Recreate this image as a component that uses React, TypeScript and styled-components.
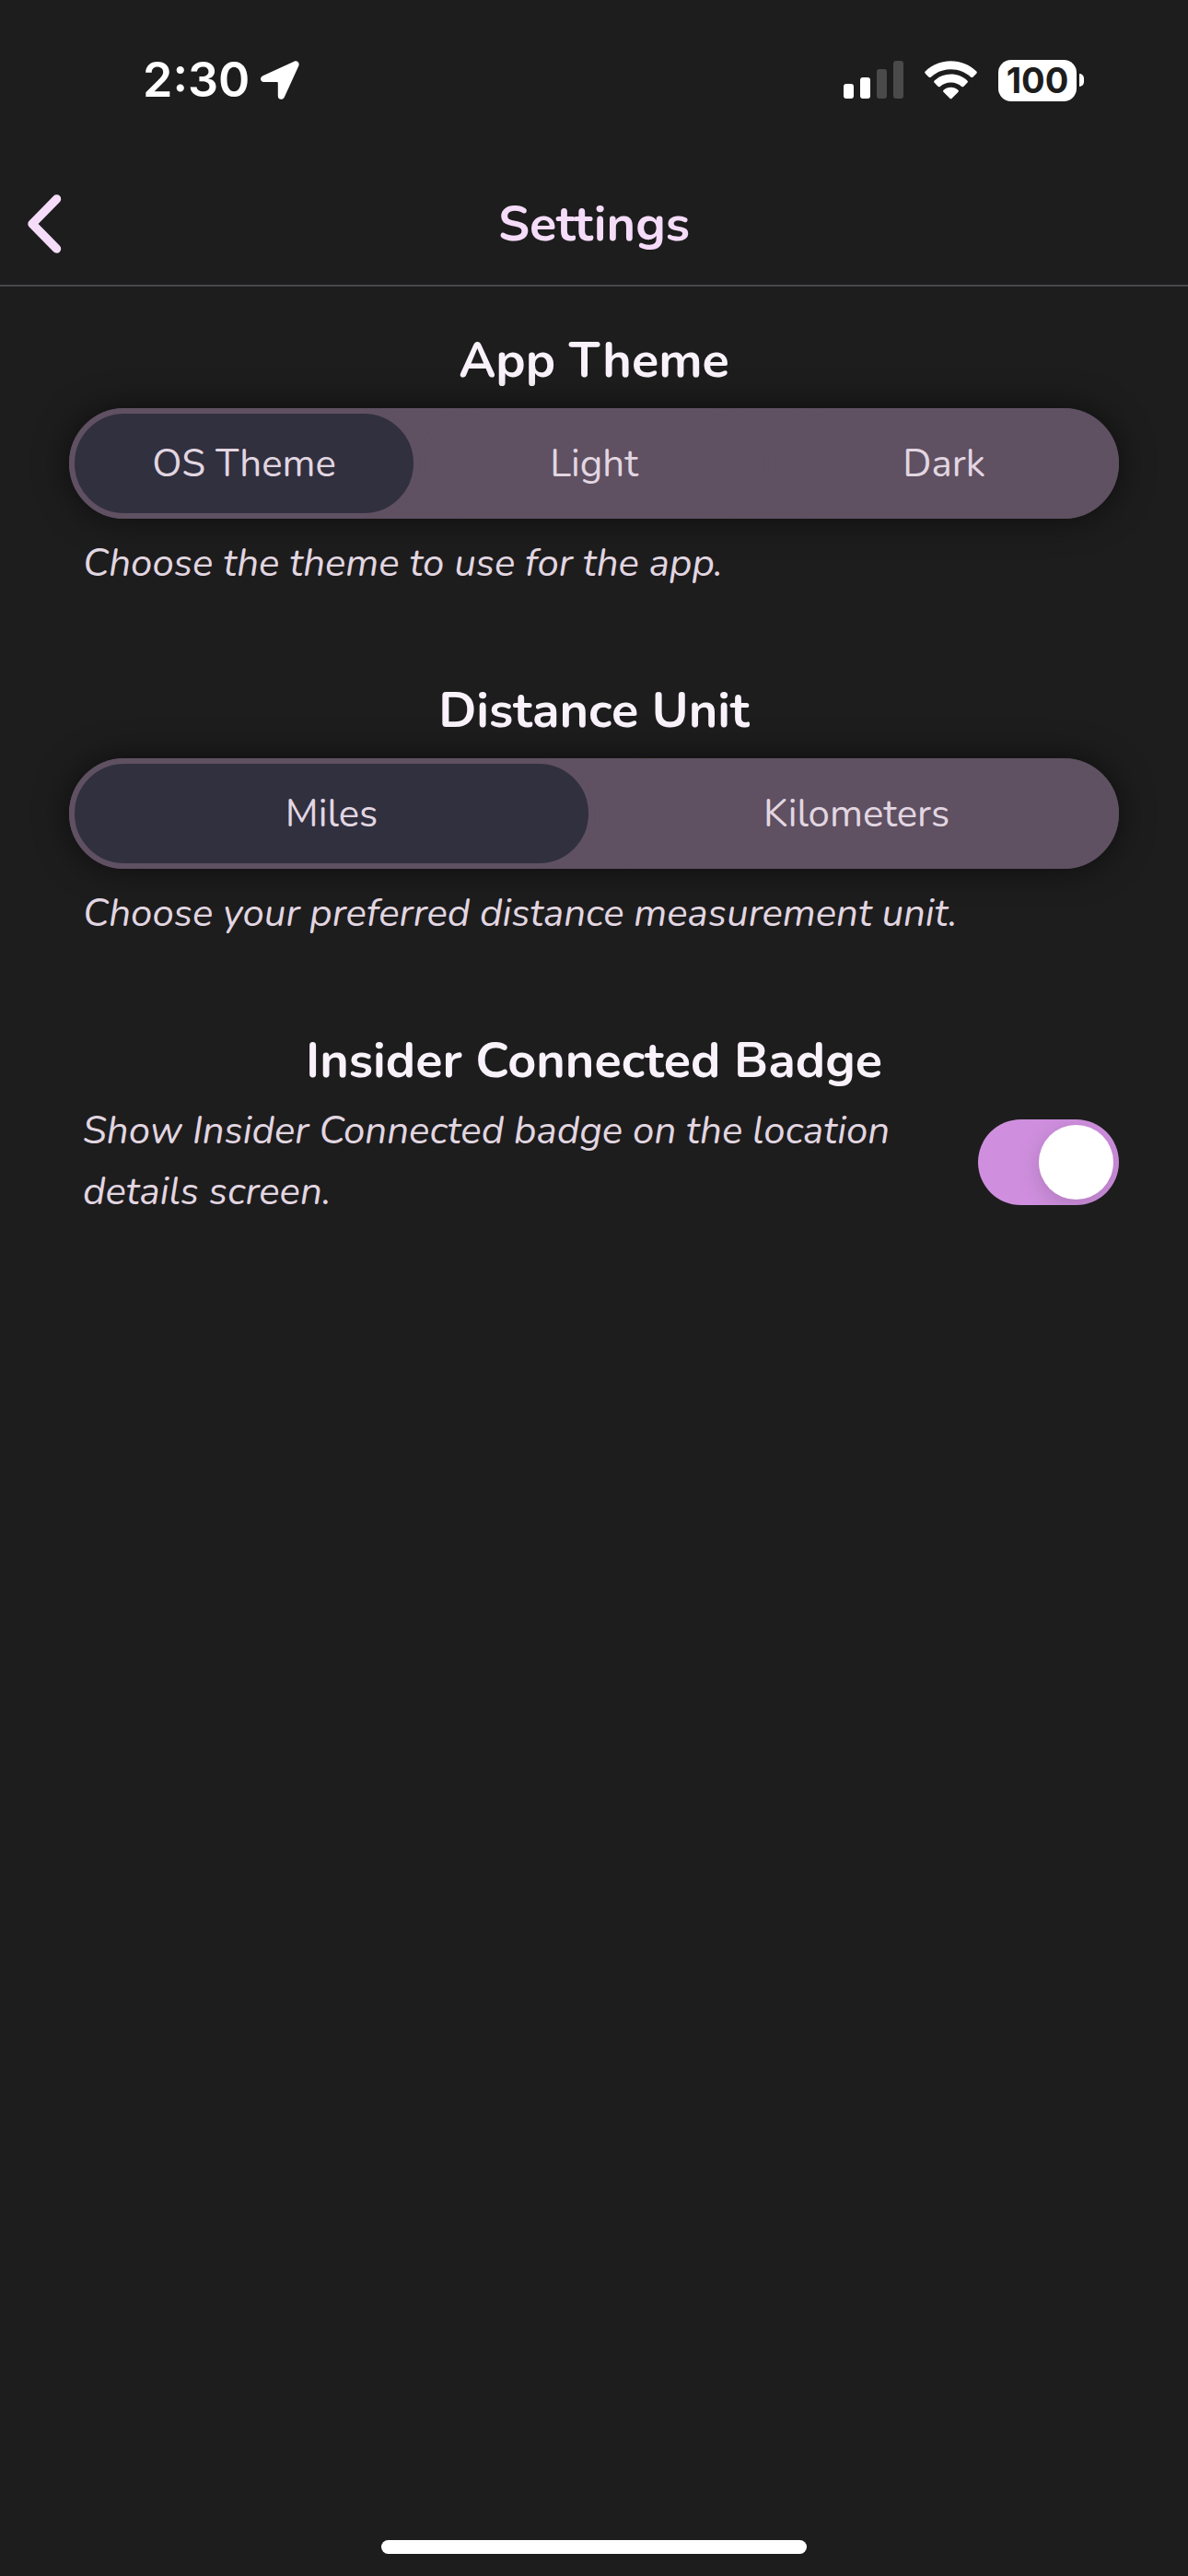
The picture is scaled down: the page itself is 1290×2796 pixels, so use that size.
import React, { useState } from "react";
import styled, { createGlobalStyle } from "styled-components";

const color = {
  background: "#1d1d1d",
  divider: "#48474a",
  accent: "#f5dcf9",
  heading: "#f9f2fb",
  text: "#e2d6e1",
  track: "#5f5062",
  selected: "#31303f",
  toggle: "#cf8fde",
};

const GlobalStyle = createGlobalStyle`
  *, *::before, *::after { box-sizing: border-box; }
  body {
    margin: 0;
    background: ${color.background};
    color: ${color.text};
    font-family: Nunito, "Open Sans", "Noto Sans", sans-serif;
    font-size: 42px;
    line-height: 66px;
  }
`;

const Screen = styled.div`
  display: flex;
  flex-direction: column;
  min-height: 100vh;
`;

const StatusBar = styled.div`
  display: flex;
  align-items: center;
  justify-content: space-between;
  height: 174px;
  padding: 0 113px 0 155px;
  color: #fff;
  font-family: Inter, sans-serif;
`;

const StatusGroup = styled.div<{ $gap: number }>`
  display: flex;
  align-items: center;
  gap: ${(p) => p.$gap}px;
`;

const Time = styled.span`
  font-size: 52px;
  font-weight: 600;
`;

const Battery = styled.div`
  display: flex;
  align-items: center;
  gap: 3px;
`;

const BatteryBody = styled.span`
  width: 85px;
  height: 45px;
  border-radius: 14px;
  background: #fff;
  color: ${color.background};
  font-size: 38px;
  font-weight: 700;
  line-height: 45px;
  text-align: center;
`;

const BatteryTip = styled.span`
  width: 5px;
  height: 14px;
  border-radius: 0 7px 7px 0;
  background: #fff;
`;

const Header = styled.header`
  display: grid;
  grid-template-columns: 96px 1fr 96px;
  align-items: center;
  height: 137px;
  padding-top: 3px;
  border-bottom: 2px solid ${color.divider};
`;

const BackButton = styled.button`
  display: flex;
  padding: 0 0 0 24px;
  border: 0;
  background: none;
  color: ${color.accent};
`;

const Title = styled.h1`
  margin: 0;
  color: ${color.accent};
  font-size: 54px;
  font-weight: 700;
  line-height: 72px;
  text-align: center;
`;

const Content = styled.main`
  display: flex;
  flex-direction: column;
  gap: 90px;
  padding: 44px 75px;
`;

const Section = styled.section`
  display: flex;
  flex-direction: column;
`;

const Heading = styled.h2`
  margin: 0 0 8px;
  color: ${color.heading};
  font-size: 54px;
  font-weight: 700;
  line-height: 72px;
  text-align: center;
`;

const Segments = styled.div`
  display: flex;
  height: 120px;
  margin: 8px 0 16px;
  border-radius: 60px;
  background: ${color.track};
  box-shadow: 0 0 36px rgba(0, 0, 0, 0.55);
`;

const Segment = styled.label`
  position: relative;
  display: flex;
  flex: 1;
  align-items: center;
  justify-content: center;
  padding-top: 2px;
  border: 6px solid ${color.track};
  border-radius: 60px;
  cursor: pointer;

  &:has(input:checked) {
    background: ${color.selected};
  }
`;

const SegmentInput = styled.input`
  position: absolute;
  inset: 0;
  margin: 0;
  opacity: 0;
  cursor: pointer;
`;

const Caption = styled.p`
  margin: 0;
  padding: 0 15px;
  font-style: italic;
`;

const SwitchRow = styled.label`
  display: flex;
  align-items: center;
  justify-content: space-between;
  gap: 60px;
`;

const SwitchText = styled.span`
  flex: 1;
  padding-left: 15px;
  font-style: italic;
`;

const Switch = styled.input`
  display: flex;
  flex: none;
  width: 153px;
  height: 93px;
  margin: 0;
  padding: 6px;
  appearance: none;
  border-radius: 47px;
  background: #4a484c;
  overflow: hidden;

  &::before {
    content: "";
    width: 81px;
    height: 81px;
    border-radius: 50%;
    background: #fff;
    box-shadow: 0 6px 24px rgba(0, 0, 0, 0.15);
  }

  &:checked {
    justify-content: flex-end;
    background: ${color.toggle};
  }
`;

const HomeIndicator = styled.div`
  width: 462px;
  height: 15px;
  margin: auto auto 24px;
  border-radius: 8px;
  background: #fff;
`;

type SegmentedProps = {
  name: string;
  label: string;
  options: string[];
};

function SegmentedControl({ name, label, options }: SegmentedProps) {
  const [value, setValue] = useState(options[0]);
  return (
    <Segments role="radiogroup" aria-label={label}>
      {options.map((option) => (
        <Segment key={option}>
          <SegmentInput
            type="radio"
            name={name}
            value={option}
            checked={value === option}
            onChange={() => setValue(option)}
          />
          {option}
        </Segment>
      ))}
    </Segments>
  );
}

function LocationIcon() {
  return (
    <svg width="42" height="42" viewBox="0 0 42 42" fill="#fff" aria-hidden="true">
      <path d="M36.3.7 2.400 16.300C-1.300 18.200-.4 23 3.500 23H17.500c.9 0 1.300.4 1.300 1.300V38c0 4.600 5.200 5.200 7.100 1.200L41.300 5.600C42.800 2.200 39.600-.9 36.300.7Z" />
    </svg>
  );
}

function SignalIcon() {
  return (
    <svg width="65" height="42" viewBox="0 0 65 42" fill="#fff" aria-hidden="true">
      <rect x="0" y="25" width="11" height="16" rx="3" />
      <rect x="18" y="18" width="11" height="23" rx="3" />
      <rect x="36" y="9" width="11" height="32" rx="3" fill="#4a4a4a" />
      <rect x="54" y="0" width="11" height="41" rx="3" fill="#4a4a4a" />
    </svg>
  );
}

function WifiIcon() {
  return (
    <svg width="57" height="42" viewBox="0 0 58 42" fill="#fff" aria-hidden="true">
      <path d="M29 0C18 0 8 4.300.7 11.300c-.7.7-.7 1.600 0 2.300l4 4c.6.600 1.500.6 2.200 0C12.700 12.200 20.500 9 29 9s16.300 3.200 22.100 8.600c.7.600 1.600.600 2.200 0l4-4c.7-.7.7-1.600 0-2.300C50 4.300 40 0 29 0Z" />
      <path d="M29 14.500c-7 0-13.300 2.600-18.100 7-.8.7-.8 1.600-.1 2.300l4.200 4.200c.6.600 1.400.6 2.100.1 3.200-2.900 7.300-4.600 11.900-4.600s8.700 1.700 11.900 4.600c.7.5 1.500.5 2.100-.1l4.200-4.200c.7-.7.7-1.600-.1-2.300-4.800-4.400-11.100-7-18.100-7Z" />
      <path d="M29 29c-3.100 0-5.900 1.100-8 3-.8.7-.7 1.500 0 2.200l6.900 7c.7.7 1.500.7 2.200 0l6.900-7c.7-.7.8-1.500 0-2.200-2.100-1.900-4.900-3-8-3Z" />
    </svg>
  );
}

function BackIcon() {
  return (
    <svg width="48" height="72" viewBox="0 0 48 72" fill="none" aria-hidden="true">
      <path
        d="M37.500 9 11 36 37.500 63"
        stroke="currentColor"
        strokeWidth="9.500"
        strokeLinecap="round"
        strokeLinejoin="round"
      />
    </svg>
  );
}

export default function App() {
  const [showBadge, setShowBadge] = useState(true);
  return (
    <Screen>
      <GlobalStyle />
      <StatusBar>
        <StatusGroup $gap={12}>
          <Time>2:30</Time>
          <LocationIcon />
        </StatusGroup>
        <StatusGroup $gap={23}>
          <SignalIcon />
          <WifiIcon />
          <Battery>
            <BatteryBody>100</BatteryBody>
            <BatteryTip />
          </Battery>
        </StatusGroup>
      </StatusBar>
      <Header>
        <BackButton type="button" aria-label="Back">
          <BackIcon />
        </BackButton>
        <Title>Settings</Title>
      </Header>
      <Content>
        <Section>
          <Heading>App Theme</Heading>
          <SegmentedControl
            name="theme"
            label="App Theme"
            options={["OS Theme", "Light", "Dark"]}
          />
          <Caption>Choose the theme to use for the app.</Caption>
        </Section>
        <Section>
          <Heading>Distance Unit</Heading>
          <SegmentedControl
            name="unit"
            label="Distance Unit"
            options={["Miles", "Kilometers"]}
          />
          <Caption>Choose your preferred distance measurement unit.</Caption>
        </Section>
        <Section>
          <Heading>Insider Connected Badge</Heading>
          <SwitchRow>
            <SwitchText>
              Show Insider Connected badge on the location details screen.
            </SwitchText>
            <Switch
              type="checkbox"
              role="switch"
              checked={showBadge}
              onChange={(event) => setShowBadge(event.target.checked)}
            />
          </SwitchRow>
        </Section>
      </Content>
      <HomeIndicator />
    </Screen>
  );
}
